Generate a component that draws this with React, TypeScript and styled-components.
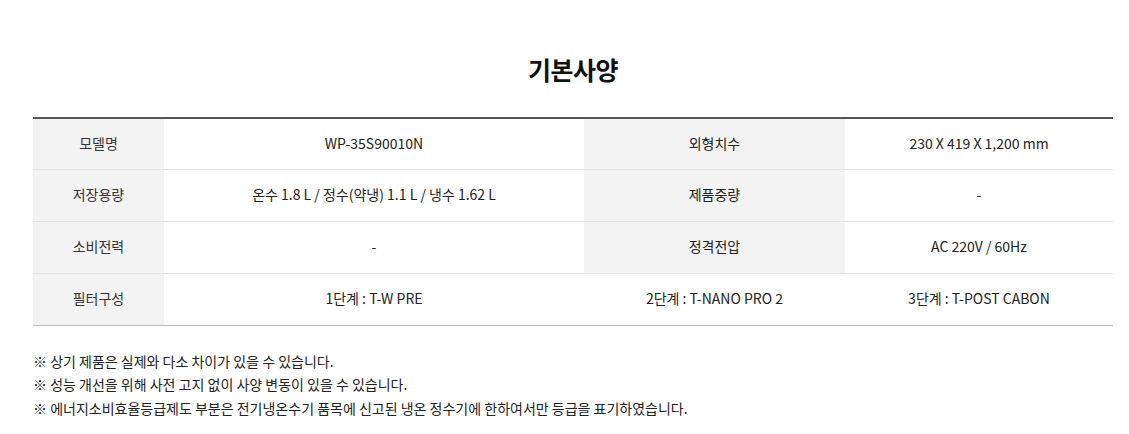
import React from "react";
import styled, { createGlobalStyle } from "styled-components";

const Global = createGlobalStyle`
  body { margin: 0; background: #fff; font-family: "Noto Sans CJK KR", "Noto Sans", sans-serif; color: #222; }
`;

const Page = styled.div`
  width: 1080px;
  padding: 51px 0 0 33px;
`;

const Title = styled.h2`
  margin: 0 0 30px;
  text-align: center;
  font-size: 25px;
  font-weight: 700;
  line-height: 36px;
  color: #111;
  letter-spacing: -0.5px;
`;

const Table = styled.table`
  width: 1080px;
  border-collapse: collapse;
  table-layout: fixed;
  border-top: 2px solid #555;
  border-bottom: 1px solid #bbb;
  font-size: 14px;
  letter-spacing: 0;
`;

const Row = styled.tr`
  & > * { height: 52px; }
  &:first-child > * { height: 51px; }
  & + & > * { border-top: 1px solid #e3e3e3; }
`;

const Th = styled.th`
  box-sizing: border-box;
  padding: 0 0 2px;
  background: #f3f3f3;
  font-weight: 400;
  color: #333;
  text-align: center;
`;

const Td = styled.td<{ $bg?: boolean }>`
  box-sizing: border-box;
  padding: 0 0 2px;
  text-align: center;
  color: #222;
  background: ${(p) => (p.$bg ? "#f3f3f3" : "#fff")};
`;

const Notes = styled.ul`
  list-style: none;
  margin: 24px 0 0;
  padding: 0;
  font-size: 14px;
  line-height: 23.5px;
  color: #222;
  letter-spacing: 0;
`;

const rows: [string, string, string, string][] = [
  ["모델명", "WP-35S90010N", "외형치수", "230 X 419 X 1,200 mm"],
  ["저장용량", "온수 1.8 L / 정수(약냉) 1.1 L / 냉수 1.62 L", "제품중량", "-"],
  ["소비전력", "-", "정격전압", "AC 220V / 60Hz"],
];

export default function App() {
  return (
    <>
      <Global />
      <Page>
        <Title>기본사양</Title>
        <Table>
          <colgroup>
            <col style={{ width: 131 }} />
            <col style={{ width: 420 }} />
            <col style={{ width: 261 }} />
            <col style={{ width: 268 }} />
          </colgroup>
          <tbody>
            {rows.map((r) => (
              <Row key={r[0]}>
                <Th>{r[0]}</Th>
                <Td>{r[1]}</Td>
                <Td $bg>{r[2]}</Td>
                <Td>{r[3]}</Td>
              </Row>
            ))}
            <Row>
              <Th>필터구성</Th>
              <Td>1단계 : T-W PRE</Td>
              <Td>2단계 : T-NANO PRO 2</Td>
              <Td>3단계 : T-POST CABON</Td>
            </Row>
          </tbody>
        </Table>
        <Notes>
          <li>※ 상기 제품은 실제와 다소 차이가 있을 수 있습니다.</li>
          <li>※ 성능 개선을 위해 사전 고지 없이 사양 변동이 있을 수 있습니다.</li>
          <li>※ 에너지소비효율등급제도 부분은 전기냉온수기 품목에 신고된 냉온 정수기에 한하여서만 등급을 표기하였습니다.</li>
        </Notes>
      </Page>
    </>
  );
}
